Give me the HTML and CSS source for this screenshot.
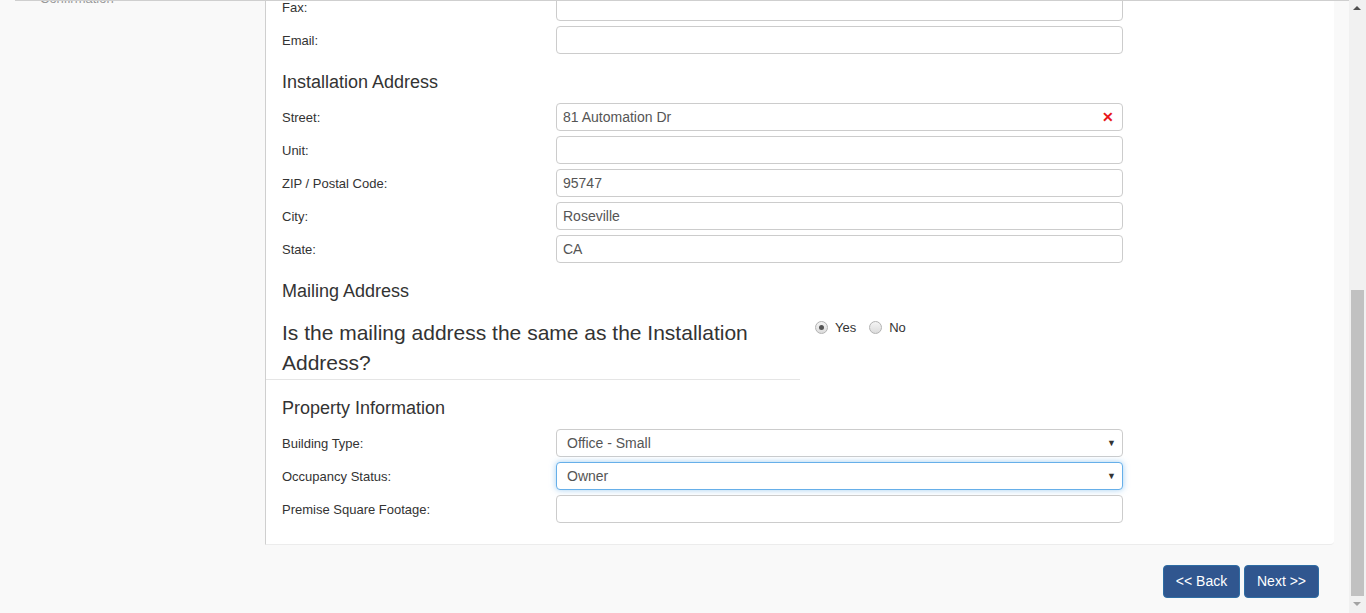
FILE: index.html
```html
<!DOCTYPE html>
<html lang="en">
<head>
<meta charset="utf-8">
<title>Property Form</title>
<link rel="stylesheet" href="styles.css">
</head>
<body>
<div class="page">
  <div class="main">
    <div class="wrap">
      <aside class="sidebar">
        <div class="step">Confirmation</div>
      </aside>
      <div class="content">
        <div class="card">
          <div class="form-row first">
            <label class="lbl">Fax:</label>
            <div class="ctl"><input class="input" type="text"></div>
          </div>
          <div class="form-row">
            <label class="lbl">Email:</label>
            <div class="ctl"><input class="input" type="text"></div>
          </div>

          <h3 class="section-title">Installation Address</h3>
          <div class="form-row">
            <label class="lbl">Street:</label>
            <div class="ctl has-clear">
              <input class="input" type="text" value="81 Automation Dr">
              <span class="clear">&#x2715;</span>
            </div>
          </div>
          <div class="form-row">
            <label class="lbl">Unit:</label>
            <div class="ctl"><input class="input" type="text"></div>
          </div>
          <div class="form-row">
            <label class="lbl">ZIP / Postal Code:</label>
            <div class="ctl"><input class="input" type="text" value="95747"></div>
          </div>
          <div class="form-row">
            <label class="lbl">City:</label>
            <div class="ctl"><input class="input" type="text" value="Roseville"></div>
          </div>
          <div class="form-row">
            <label class="lbl">State:</label>
            <div class="ctl"><input class="input" type="text" value="CA"></div>
          </div>

          <h3 class="section-title mail">Mailing Address</h3>
          <div class="question-row">
            <div class="question">Is the mailing address the same as the Installation Address?</div>
            <div class="radios">
              <label class="radio"><span class="dot checked"></span>Yes</label>
              <label class="radio"><span class="dot"></span>No</label>
            </div>
          </div>

          <h3 class="section-title prop">Property Information</h3>
          <div class="form-row">
            <label class="lbl">Building Type:</label>
            <div class="ctl"><div class="select">Office - Small<span class="caret">&#9660;</span></div></div>
          </div>
          <div class="form-row">
            <label class="lbl">Occupancy Status:</label>
            <div class="ctl"><div class="select focus">Owner<span class="caret">&#9660;</span></div></div>
          </div>
          <div class="form-row">
            <label class="lbl">Premise Square Footage:</label>
            <div class="ctl"><input class="input" type="text"></div>
          </div>
        </div>
        <div class="actions">
          <button class="btn back">&lt;&lt; Back</button>
          <button class="btn next">Next &gt;&gt;</button>
        </div>
      </div>
    </div>
  </div>
  <div class="scrollbar">
    <div class="arrow up"></div>
    <div class="track"><div class="thumb"></div></div>
    <div class="arrow down"></div>
  </div>
</div>
</body>
</html>
```

FILE: styles.css
```css
* { box-sizing: border-box; }
html, body { margin: 0; padding: 0; }
body {
  background: #f9f9f9;
  font-family: "Liberation Sans", Arial, sans-serif;
  color: #333;
  height: 613px;
  overflow: hidden;
}
.page {
  display: flex;
  height: 613px;
}
.main {
  flex: 1;
  min-width: 0;
}
.wrap {
  margin-left: 15px;
  border-top: 1px solid #cfcfcf;
  display: flex;
  height: 612px;
  overflow: hidden;
}
.sidebar {
  width: 250px;
  flex: none;
}
.step {
  font-size: 13px;
  color: #999;
  padding-left: 25px;
  margin-top: -10px;
  line-height: 16px;
}
.content {
  width: 1069px;
  flex: none;
  margin-top: -1px;
}
.card {
  display: flex;
  flex-direction: column;
  background: #fff;
  border-left: 1px solid #cfcfcf;
  border-bottom: 1px solid #ececec;
  border-radius: 0 0 4px 0;
  padding: 0 0 16px 16px;
  height: 545px;
}
.form-row {
  display: grid;
  grid-template-columns: 274px 567px;
  align-items: center;
  height: 28px;
  margin-bottom: 5px;
  flex: none;
}
.form-row.first { margin-top: -7px; }
.lbl {
  font-size: 13px;
  color: #333;
  line-height: 16px;
  padding-top: 2px;
}
.ctl { position: relative; height: 28px; }
.input, .select {
  display: block;
  width: 567px;
  height: 28px;
  border: 1px solid #ccc;
  border-radius: 4px;
  background: #fff;
  padding: 0 6px;
  font-family: "Liberation Sans", Arial, sans-serif;
  font-size: 14px;
  color: #555;
  outline: none;
  margin: 0;
}
.select {
  line-height: 26px;
  padding-left: 10px;
  position: relative;
}
.select.focus {
  border-color: #66afe9;
  box-shadow: 0 0 6px rgba(102, 175, 233, 0.6);
}
.caret {
  position: absolute;
  right: 6px;
  top: 0;
  font-size: 9px;
  color: #333;
  line-height: 26px;
}
.clear {
  position: absolute;
  right: 9px;
  top: 6px;
  color: #e8141a;
  font-size: 14px;
  font-weight: bold;
  line-height: 16px;
}
.section-title {
  font-size: 18px;
  font-weight: normal;
  line-height: 20px;
  margin: 13px 0 11px;
  color: #333;
  flex: none;
}
.section-title.mail { margin-bottom: 17px; }
.section-title.prop { margin-top: 18px; }
.question-row {
  display: grid;
  grid-template-columns: 534px 1fr;
  margin-left: -16px;
  flex: none;
}
.question {
  font-size: 21px;
  line-height: 30px;
  padding: 0 15px 1px 16px;
  border-bottom: 1px solid #e5e5e5;
  color: #333;
}
.radios {
  display: flex;
  align-items: center;
  padding-left: 15px;
  height: 18px;
  margin-top: 0;
}
.radio {
  display: flex;
  align-items: center;
  font-size: 13px;
  color: #333;
  margin-right: 13px;
}
.dot {
  width: 13px;
  height: 13px;
  border-radius: 50%;
  border: 1px solid #b3b3b3;
  background: linear-gradient(#f4f4f4, #dcdcdc);
  margin-right: 7px;
  position: relative;
}
.dot.checked::after {
  content: "";
  position: absolute;
  left: 3px;
  top: 3px;
  width: 5px;
  height: 5px;
  border-radius: 50%;
  background: #555;
}
.actions {
  display: flex;
  justify-content: flex-end;
  gap: 4px;
  padding-right: 15px;
  margin-top: 20px;
}
.btn {
  height: 33px;
  background: #30568f;
  border: 1px solid #2e6da4;
  border-radius: 4px;
  color: #fff;
  font-family: "Liberation Sans", Arial, sans-serif;
  font-size: 14px;
  padding: 0 10px;
  line-height: 31px;
  white-space: nowrap;
}
.btn.back { width: 77px; }
.btn.next { width: 75px; }
.scrollbar {
  width: 17px;
  flex: none;
  background: #f1f1f1;
  display: flex;
  flex-direction: column;
  height: 613px;
}
.arrow {
  height: 17px;
  position: relative;
}
.arrow.up::after {
  content: "";
  position: absolute;
  left: 4px;
  top: 6px;
  border-left: 4px solid transparent;
  border-right: 4px solid transparent;
  border-bottom: 4px solid #505050;
}
.arrow.down::after {
  content: "";
  position: absolute;
  left: 4px;
  top: 6px;
  border-left: 4px solid transparent;
  border-right: 4px solid transparent;
  border-top: 4px solid #a3a3a3;
}
.track {
  flex: 1;
  padding-top: 273px;
  display: flex;
  flex-direction: column;
}
.thumb {
  flex: 1;
  margin: 0 2px;
  background: #c1c1c1;
}
```
